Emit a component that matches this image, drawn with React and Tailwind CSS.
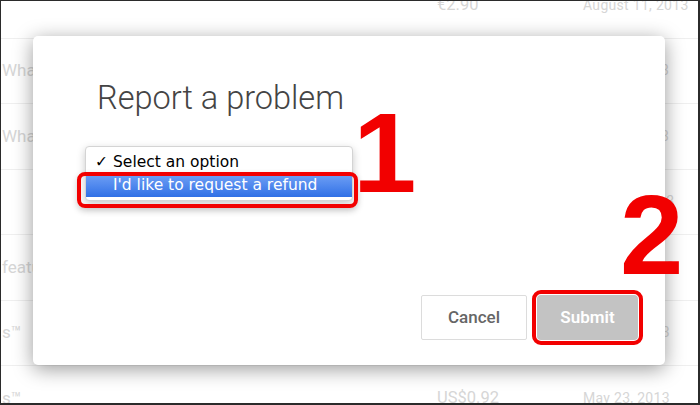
import React from "react";

const rows = [
  { left: "", price: "€2.90", date: "August 11, 2013" },
  { left: "What's New", price: "€0.89", date: "July 29, 2013" },
  { left: "What's New", price: "€1.49", date: "July 22, 2013" },
  { left: "", price: "€0.99", date: "June 26, 2013" },
  { left: "features", price: "€4.99", date: "June 18, 2013" },
  { left: "s™", price: "US$1.99", date: "May 30, 2013" },
  { left: "s™", price: "US$0.92", date: "May 23, 2013" },
];

export default function App() {
  return (
    <div
      className="relative w-[700px] h-[405px] overflow-hidden bg-white border-l border-t border-r-2 border-b-2 border-[#2b2b2b]"
      style={{ fontFamily: "Roboto, 'Liberation Sans', sans-serif" }}
    >
      {/* background table */}
      <div className="-mt-[28px] text-[#d6d6d6]">
        {rows.map((r, i) => (
          <div key={i} className="flex items-center h-[65.5px] border-b border-[#efefef]">
            <div className="w-[436px] pl-[1px] text-[17px] whitespace-nowrap">{r.left}</div>
            <div className="w-[146px] text-[16.5px] whitespace-nowrap">{r.price}</div>
            <div className="text-[14px] tracking-[0.3px] whitespace-nowrap">{r.date}</div>
          </div>
        ))}
      </div>

      {/* dialog */}
      <div className="absolute left-[32px] top-[35px] w-[632px] h-[329px] bg-white rounded-[5px] shadow-[0_4px_20px_rgba(0,0,0,0.4)] flex flex-col pt-[44px] pl-[52px]">
        <h1 className="ml-[12px] h-[36px] leading-[36px] text-[32.5px] font-light text-[#444] whitespace-nowrap">
          Report a problem
        </h1>

        <div
          className="relative mt-[30px] w-[268px] bg-white border border-[#d4d4d4] rounded-[4px] shadow-[0_3px_8px_rgba(0,0,0,0.22)] pt-[4px] pb-[3px] text-[15.5px] text-black"
          style={{ fontFamily: "'DejaVu Sans', sans-serif" }}
        >
          <div className="flex items-center h-[24px] pl-[9px]">
            <span className="w-[18px]">✓</span>
            <span>Select an option</span>
          </div>
          <div className="flex items-center h-[22px] pl-[27px] bg-linear-to-b from-[#6d9ef4] to-[#3070e6] text-white">
            I'd like to request a refund
          </div>
          <div className="absolute -left-[9px] top-[25px] w-[281px] h-[36px] border-4 border-[#f20000] rounded-[8px] shadow-[0_3px_6px_rgba(0,0,0,0.2)]" />
        </div>

        <div className="mt-auto flex justify-end gap-[10px] pr-[27px] pb-[25px]">
          <button className="w-[106px] h-[45px] border border-[#dcdcdc] rounded-[2px] bg-white text-[#666] text-[17px] font-medium">
            Cancel
          </button>
          <button className="w-[101px] h-[45px] rounded-[4px] bg-[#c3c3c3] text-white text-[17px] font-semibold outline-4 outline-[#f20000] outline-offset-1">
            Submit
          </button>
        </div>
      </div>

      {/* annotations */}
      <span
        className="absolute left-[352px] top-[95px] text-[114px] leading-none font-bold text-[#f20000]"
        style={{ fontFamily: "'Liberation Sans', Arial, sans-serif" }}
      >
        1
      </span>
      <span
        className="absolute left-[619px] top-[177px] text-[114px] leading-none font-bold text-[#f20000]"
        style={{ fontFamily: "'Liberation Sans', Arial, sans-serif" }}
      >
        2
      </span>
    </div>
  );
}
